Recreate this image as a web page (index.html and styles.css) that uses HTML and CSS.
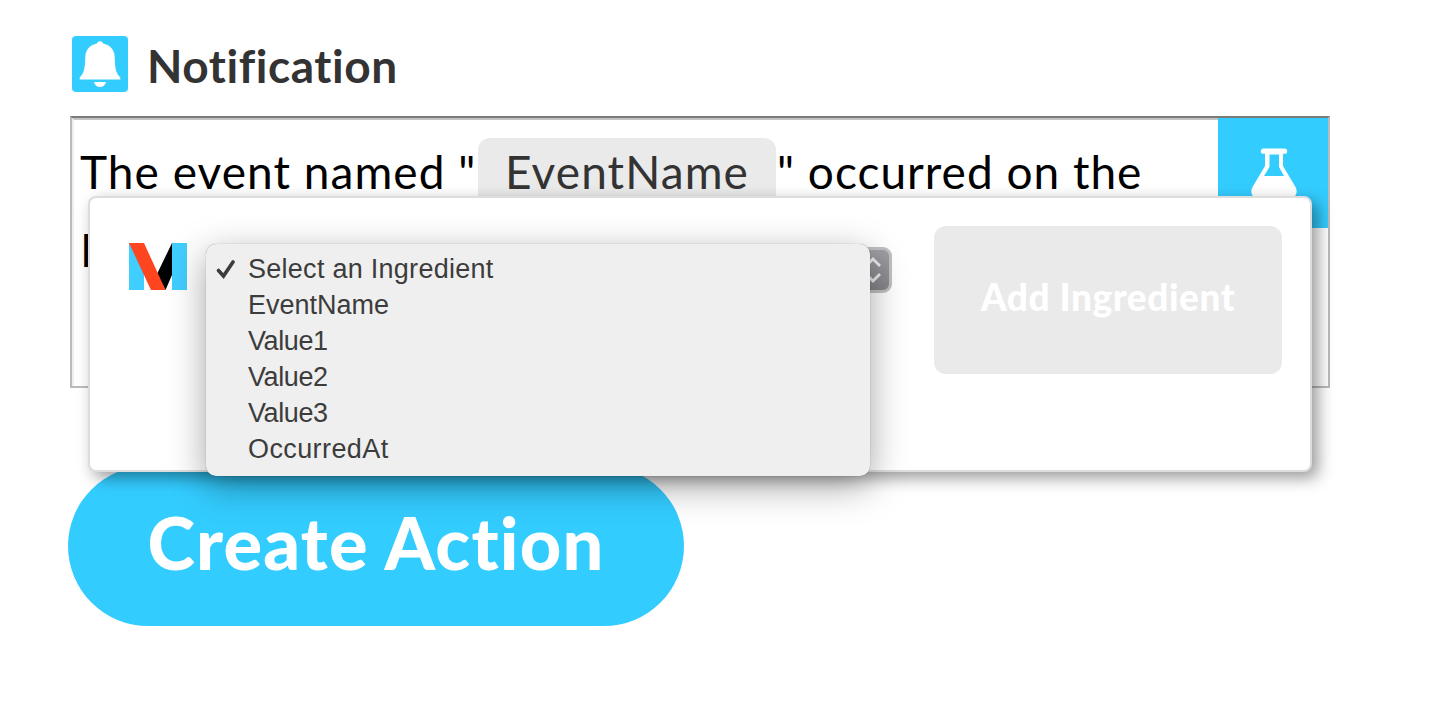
FILE: index.html
```html
<!DOCTYPE html>
<html lang="en">
<head>
<meta charset="utf-8">
<title>Notification</title>
<link rel="stylesheet" href="styles.css">
</head>
<body>
<main class="action">
  <header class="heading">
    <svg class="bell" viewBox="0 0 56 56"><rect width="56" height="56" rx="4" fill="#3cf"/><path fill="#fff" d="M28 5.200c-1.600 0-2.800 1-3 2.200C17.500 8.800 13.500 14 13.300 21c-.3 9-.5 15.500-5.600 20.500v2h40.600v-2C43.200 36.500 43 30 42.700 21 42.500 14 38.500 8.800 31 7.400c-.2-1.200-1.400-2.200-3-2.200zM22 46h12c-.6 3-3 5-6 5s-5.400-2-6-5z"/></svg>
    <h1 class="title">Notification</h1>
  </header>
  <section class="editor">
    <div class="message">
      <div class="line"><span class="words words-start">The event named "</span><span class="token"><span class="token-label">EventName</span></span><span class="words words-end">" occurred on the</span></div>
      <div class="line">M</div>
    </div>
    <div class="flask-button">
      <svg class="flask" viewBox="0 0 110 110"><path fill="#fff" fill-rule="evenodd" d="M45.500 30.500h21a2.500 2.500 0 0 1 0 5.300H65V48l12.500 21c3 6 0 11-6 11h-31c-6 0-9-5-6-11L47 48V35.800h-1.500a2.500 2.500 0 0 1 0-5.300zM51.500 36.500V49L46 58h20l-5-9V36.500z"/></svg>
    </div>
    <div class="popup">
      <svg class="logo" viewBox="0 0 58 47"><path fill="#40ceff" d="M0 0h15v47H0zM43 0h15v47H43z"/><path fill="#000" d="M43 0v32L36.500 47 28 31z"/><path fill="#ff4520" d="M0 0h15l21.500 47H22z"/></svg>
      <div class="select"><svg class="arrows" viewBox="0 0 20 28"><path d="M3 10l7-7 7 7M3 18l7 7 7-7" fill="none" stroke="#eee" stroke-width="2.800"/></svg></div>
      <button class="add">Add Ingredient</button>
      <ul class="menu">
        <li class="option option-selected"><svg class="check" viewBox="0 0 20 20"><path d="M2.500 11.500l5 5.500L17 3" fill="none" stroke="#3c3c3c" stroke-width="3.600" stroke-linecap="round"/></svg>Select an Ingredient</li>
        <li class="option">EventName</li>
        <li class="option option-value">Value1</li>
        <li class="option option-value">Value2</li>
        <li class="option option-value">Value3</li>
        <li class="option option-date">OccurredAt</li>
      </ul>
    </div>
  </section>
  <button class="create">Create Action</button>
</main>
</body>
</html>
```
FILE: styles.css
```css
* { box-sizing: border-box; }
body { margin: 0; background: #fff; font-family: Lato, sans-serif; font-variant-ligatures: none; overflow: hidden; }
button { border: 0; font-family: inherit; font-variant-ligatures: none; }
.action { padding: 36px 112px 0 70px; height: 714px; }
.heading { display: flex; align-items: center; height: 56px; margin: 0 0 24px 2px; }
.bell { width: 56px; height: 56px; }
.title { margin: 4px 0 0 19px; font-size: 46px; line-height: 56px; font-weight: 700; color: #333; letter-spacing: .55px; }
.editor { position: relative; display: flex; justify-content: space-between; height: 272px; border: 2px solid; border-color: #7b7b7b #bbb #bbb #bbb; }
.message { flex: 1; padding: 18px 0 0 6px; border-top: 2px solid #c4c4c4; border-left: 2px solid #eee; font-size: 46px; color: #000; }
.line { display: flex; height: 78px; line-height: 68px; white-space: pre; }
.words-start { width: 398px; letter-spacing: 1.05px; }
.words-end { padding-left: 1px; letter-spacing: 1px; }
.token { width: 298px; height: 70px; border-radius: 12px; background: #eaeaea; color: #333; text-align: center; }
.token-label { letter-spacing: 1.1px; }
.flask-button { width: 110px; height: 110px; background: #3cf; }
.flask { display: block; width: 110px; height: 110px; }
.popup { position: absolute; left: 16px; top: 78px; width: 1224px; height: 276px; display: flex; align-items: flex-start; background: #fff; border: 2px solid #ddd; border-radius: 8px; box-shadow: 6px 6px 16px rgba(0,0,0,.4); padding: 28px 28px 0 39px; }
.logo { width: 58px; height: 47px; margin-top: 17px; }
.select { width: 683px; height: 46px; margin: 21px 42px 0 22px; border: 3px solid #c0c0c2; border-radius: 9px; background: linear-gradient(#a09fa4, #858489); display: flex; justify-content: flex-end; align-items: center; padding-right: 6px; }
.arrows { width: 20px; height: 28px; }
.add { width: 348px; height: 148px; border-radius: 12px; background: #eaeaea; color: #fff; font-size: 37px; font-weight: 900; letter-spacing: .55px; margin-left: auto; padding: 0 0 7px; }
.menu { position: absolute; left: 116px; top: 46px; width: 664px; height: 232px; margin: 0; padding: 7px 0 0 42px; list-style: none; border-radius: 10px; background: #efefef; box-shadow: 0 0 1px rgba(0,0,0,.45), 0 10px 36px rgba(0,0,0,.36); font: 27px/36px "Liberation Sans", Arial, sans-serif; color: #3c3c3c; }
.option { position: relative; height: 36px; }
.option-selected { letter-spacing: .27px; }
.option-value { letter-spacing: -.4px; }
.option-date { letter-spacing: .4px; }
.check { position: absolute; left: -32px; top: 8px; width: 20px; height: 20px; }
.create { display: block; width: 616px; height: 160px; margin: 78px 0 0 -2px; padding: 0 0 9px; border-radius: 80px; background: #3cf; color: #fff; font-size: 72px; font-weight: 900; letter-spacing: 1.2px; }
```
